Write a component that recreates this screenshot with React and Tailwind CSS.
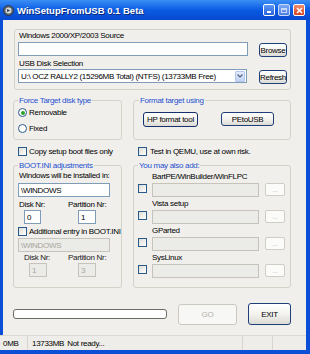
const XPButton = ({ className = "", children }) => (
  <div className={"flex items-center justify-center rounded-[3px] border border-[#1f3f7a] bg-gradient-to-b from-[#ffffff] via-[#f4f3ef] to-[#dcdad3] text-black " + className}>
    {children}
  </div>
);

const Check = ({ className = "" }) => (
  <div className={"w-[9px] h-[9px] border border-[#2a5a8a] bg-gradient-to-br from-[#dcdcd6] to-[#ffffff] shrink-0 " + className} />
);

const TextBox = ({ className = "", children }) => (
  <div className={"h-[14px] border border-[#7f9db9] bg-white flex items-center pl-[2px] text-black " + className}>{children}</div>
);

const DisBox = ({ className = "", children }) => (
  <div className={"h-[14px] border border-[#c5c3ba] bg-[#ebebe8] flex items-center pl-[2px] text-[#a8a69c] " + className}>{children}</div>
);

const AddItem = ({ label }) => (
  <div>
    <div className="pl-[14px] mt-[2px]">{label}</div>
    <div className="flex items-start mt-[2px]">
      <Check className="mt-[1px]" />
      <DisBox className="ml-[5px] w-[107px]" />
      <div className="ml-[6px] w-[20px] h-[13px] border border-[#cfcdc4] rounded-[2px] bg-[#fbfbfa] flex items-center justify-center text-[#c5c3ba] text-[7px]">...</div>
    </div>
  </div>
);

export default function App() {
  return (
    <div className="w-[310px] h-[354px] flex flex-col overflow-hidden bg-[#0b4fd6] font-['Liberation_Sans',Arial,sans-serif] text-[8px] leading-[9px] tracking-[-0.3px] text-black">
      {/* Title bar */}
      <div className="h-[20px] shrink-0 flex items-center bg-gradient-to-b from-[#3b8ef5] via-[#0a5be3] to-[#0849cf] pl-[3px] pr-[5px]">
        <svg width="11" height="11" viewBox="0 0 11 11">
          <circle cx="5.5" cy="5.5" r="5" fill="#5b6470" stroke="#2a2f38" strokeWidth="0.8" />
          <circle cx="5.5" cy="5.5" r="3" fill="#d7dbe0" />
          <path d="M4 4 L7.5 5.5 L4 7 Z" fill="#3d4652" />
        </svg>
        <div className="ml-[3px] text-white font-bold text-[9.5px] leading-[11px] tracking-[0px] [text-shadow:1px_1px_0_#0a2a7a]">WinSetupFromUSB 0.1 Beta</div>
        <div className="ml-auto flex items-center gap-[3px]">
          <div className="w-[12px] h-[12px] rounded-[2px] border border-white bg-gradient-to-b from-[#5d97f5] to-[#2862dd] flex items-end justify-start pl-[3px] pb-[2px]">
            <div className="w-[4px] h-[2px] bg-white" />
          </div>
          <div className="w-[12px] h-[12px] rounded-[2px] border border-[#c8d8f8] bg-gradient-to-b from-[#7ba8f3] to-[#4c7fe4] flex items-center justify-center">
            <div className="w-[6px] h-[5px] border border-[#c8d8f8] border-t-2" />
          </div>
          <div className="w-[12px] h-[12px] rounded-[2px] border border-white bg-gradient-to-b from-[#ee8a6a] to-[#d6401c] flex items-center justify-center">
            <svg width="7" height="7" viewBox="0 0 7 7">
              <path d="M1 1 L6 6 M6 1 L1 6" stroke="white" strokeWidth="1.5" />
            </svg>
          </div>
        </div>
      </div>

      {/* Client */}
      <div className="h-[315px] shrink-0 ml-[3px] mr-[4px] bg-[#f0efec] pl-[10px] pt-[9px]">
        {/* Top group */}
        <div className="ml-[1px] w-[277px] h-[61px] border border-[#d5d2c8] rounded-[3px] pl-[3px] pt-[1px]">
          <div className="pl-[1px]">Windows 2000/XP/2003 Source</div>
          <div className="flex items-start mt-[2px]">
            <TextBox className="w-[230px]" />
            <XPButton className="ml-[11px] mt-[1px] w-[28px] h-[14px]">Browse</XPButton>
          </div>
          <div className="pl-[1px] mt-[2px]">USB Disk Selection</div>
          <div className="flex items-start mt-[1px]">
            <div className="w-[229px] h-[14px] border border-[#7f9db9] bg-white flex items-center pl-[2px] pr-[1px]">
              <span className="whitespace-nowrap">U:\ OCZ RALLY2 (15296MB Total) (NTFS) (13733MB Free)</span>
              <div className="ml-auto w-[10px] h-[11px] rounded-[1px] border border-[#b4c6ec] bg-gradient-to-b from-[#e4ebfb] to-[#c4d3f5] flex items-center justify-center">
                <svg width="6" height="4" viewBox="0 0 6 4">
                  <path d="M0.5 0.5 L3 3 L5.5 0.5" stroke="#4d6185" strokeWidth="1.2" fill="none" />
                </svg>
              </div>
            </div>
            <XPButton className="ml-[12px] mt-[1px] w-[28px] h-[14px]">Refresh</XPButton>
          </div>
        </div>

        {/* Row 2 */}
        <div className="flex items-start mt-[6px]">
          <fieldset className="w-[109px] h-[44px] border border-[#d5d2c8] rounded-[3px] pl-[4px]">
            <legend className="px-[1px] text-[#1f4fcf]">Force Target disk type</legend>
            <div className="flex items-center mt-[3px]">
              <div className="w-[9px] h-[9px] rounded-full border border-[#2a5a8a] bg-white flex items-center justify-center">
                <div className="w-[4px] h-[4px] rounded-full bg-[#2aa22a]" />
              </div>
              <span className="ml-[2px]">Removable</span>
            </div>
            <div className="flex items-center mt-[7px]">
              <div className="w-[9px] h-[9px] rounded-full border border-[#2a5a8a] bg-white" />
              <span className="ml-[2px]">Fixed</span>
            </div>
          </fieldset>
          <fieldset className="ml-[11px] w-[158px] h-[44px] border border-[#d5d2c8] rounded-[3px] pl-[5px]">
            <legend className="px-[1px] text-[#1f4fcf]">Format target using</legend>
            <div className="flex items-start mt-[7px]">
              <XPButton className="ml-[4px] w-[55px] h-[15px] border-[#15306a]">HP format tool</XPButton>
              <XPButton className="ml-[23px] w-[53px] h-[14px]">PEtoUSB</XPButton>
            </div>
          </fieldset>
        </div>

        {/* Row 3 */}
        <div className="flex items-center mt-[7px]">
          <div className="w-[120px] pl-[5px] flex items-center">
            <Check />
            <span className="ml-[2px] whitespace-nowrap">Copy setup boot files only</span>
          </div>
          <div className="pl-[5px] flex items-center">
            <Check />
            <span className="ml-[3px] whitespace-nowrap">Test in QEMU, use at own risk.</span>
          </div>
        </div>

        {/* Row 4 */}
        <div className="flex items-start mt-[5px]">
          <fieldset className="w-[109px] h-[127px] border border-[#d5d2c8] rounded-[3px] pl-[4px]">
            <legend className="px-[1px] text-[#1f4fcf]">BOOT.INI adjustments</legend>
            <div className="mt-[1px] pl-[1px] whitespace-nowrap">Windows will be installed in:</div>
            <TextBox className="mt-[3px] w-[92px]">\WINDOWS</TextBox>
            <div className="flex mt-[3px]">
              <span className="pl-[1px] w-[50px]">Disk Nr:</span>
              <span>Partition Nr:</span>
            </div>
            <div className="flex mt-[1px]">
              <TextBox className="ml-[6px] w-[17px]">0</TextBox>
              <TextBox className="ml-[37px] w-[18px]">1</TextBox>
            </div>
            <div className="flex items-center mt-[3px]">
              <Check />
              <span className="ml-[2px] whitespace-nowrap">Additional entry in BOOT.INI</span>
            </div>
            <DisBox className="mt-[2px] w-[92px]">\WINDOWS</DisBox>
            <div className="flex mt-[1px] text-[#1a1a1a]">
              <span className="pl-[6px] w-[50px]">Disk Nr:</span>
              <span>Partition Nr:</span>
            </div>
            <div className="flex mt-[1px]">
              <DisBox className="ml-[11px] w-[18px]">1</DisBox>
              <DisBox className="ml-[31px] w-[18px]">3</DisBox>
            </div>
          </fieldset>
          <fieldset className="ml-[11px] w-[158px] h-[127px] border border-[#d5d2c8] rounded-[3px] pl-[4px]">
            <legend className="px-[1px] text-[#1f4fcf]">You may also add:</legend>
            <AddItem label="BartPE/WinBuilder/WinFLPC" />
            <AddItem label="Vista setup" />
            <AddItem label="GParted" />
            <AddItem label="SysLinux" />
          </fieldset>
        </div>

        {/* Row 5 */}
        <div className="flex items-center mt-[15px]">
          <div className="w-[154px] h-[10px] border border-[#6b6b68] rounded-[3px] bg-white" />
          <div className="ml-[11px] w-[59px] h-[21px] border border-[#cac8bf] rounded-[3px] bg-[#f7f7f5] flex items-center justify-center text-[#b5b3aa]">GO</div>
          <XPButton className="ml-[11px] w-[43px] h-[22px]">EXIT</XPButton>
        </div>
      </div>

      {/* Status bar */}
      <div className="h-[15px] shrink-0 mr-[4px] bg-[#eeede9] border-t border-[#dcdad3] flex items-center">
        <div className="w-[28px] pl-[3px] h-full flex items-center border-r border-[#d8d6cf]">0MB</div>
        <div className="pl-[4px] w-[215px] h-full flex items-center border-r border-[#d8d6cf]">
          <span>13733MB</span>
          <span className="ml-[3px]">Not ready...</span>
        </div>
        <div className="w-[30px] h-full border-r border-[#d8d6cf]" />
      </div>
    </div>
  );
}
